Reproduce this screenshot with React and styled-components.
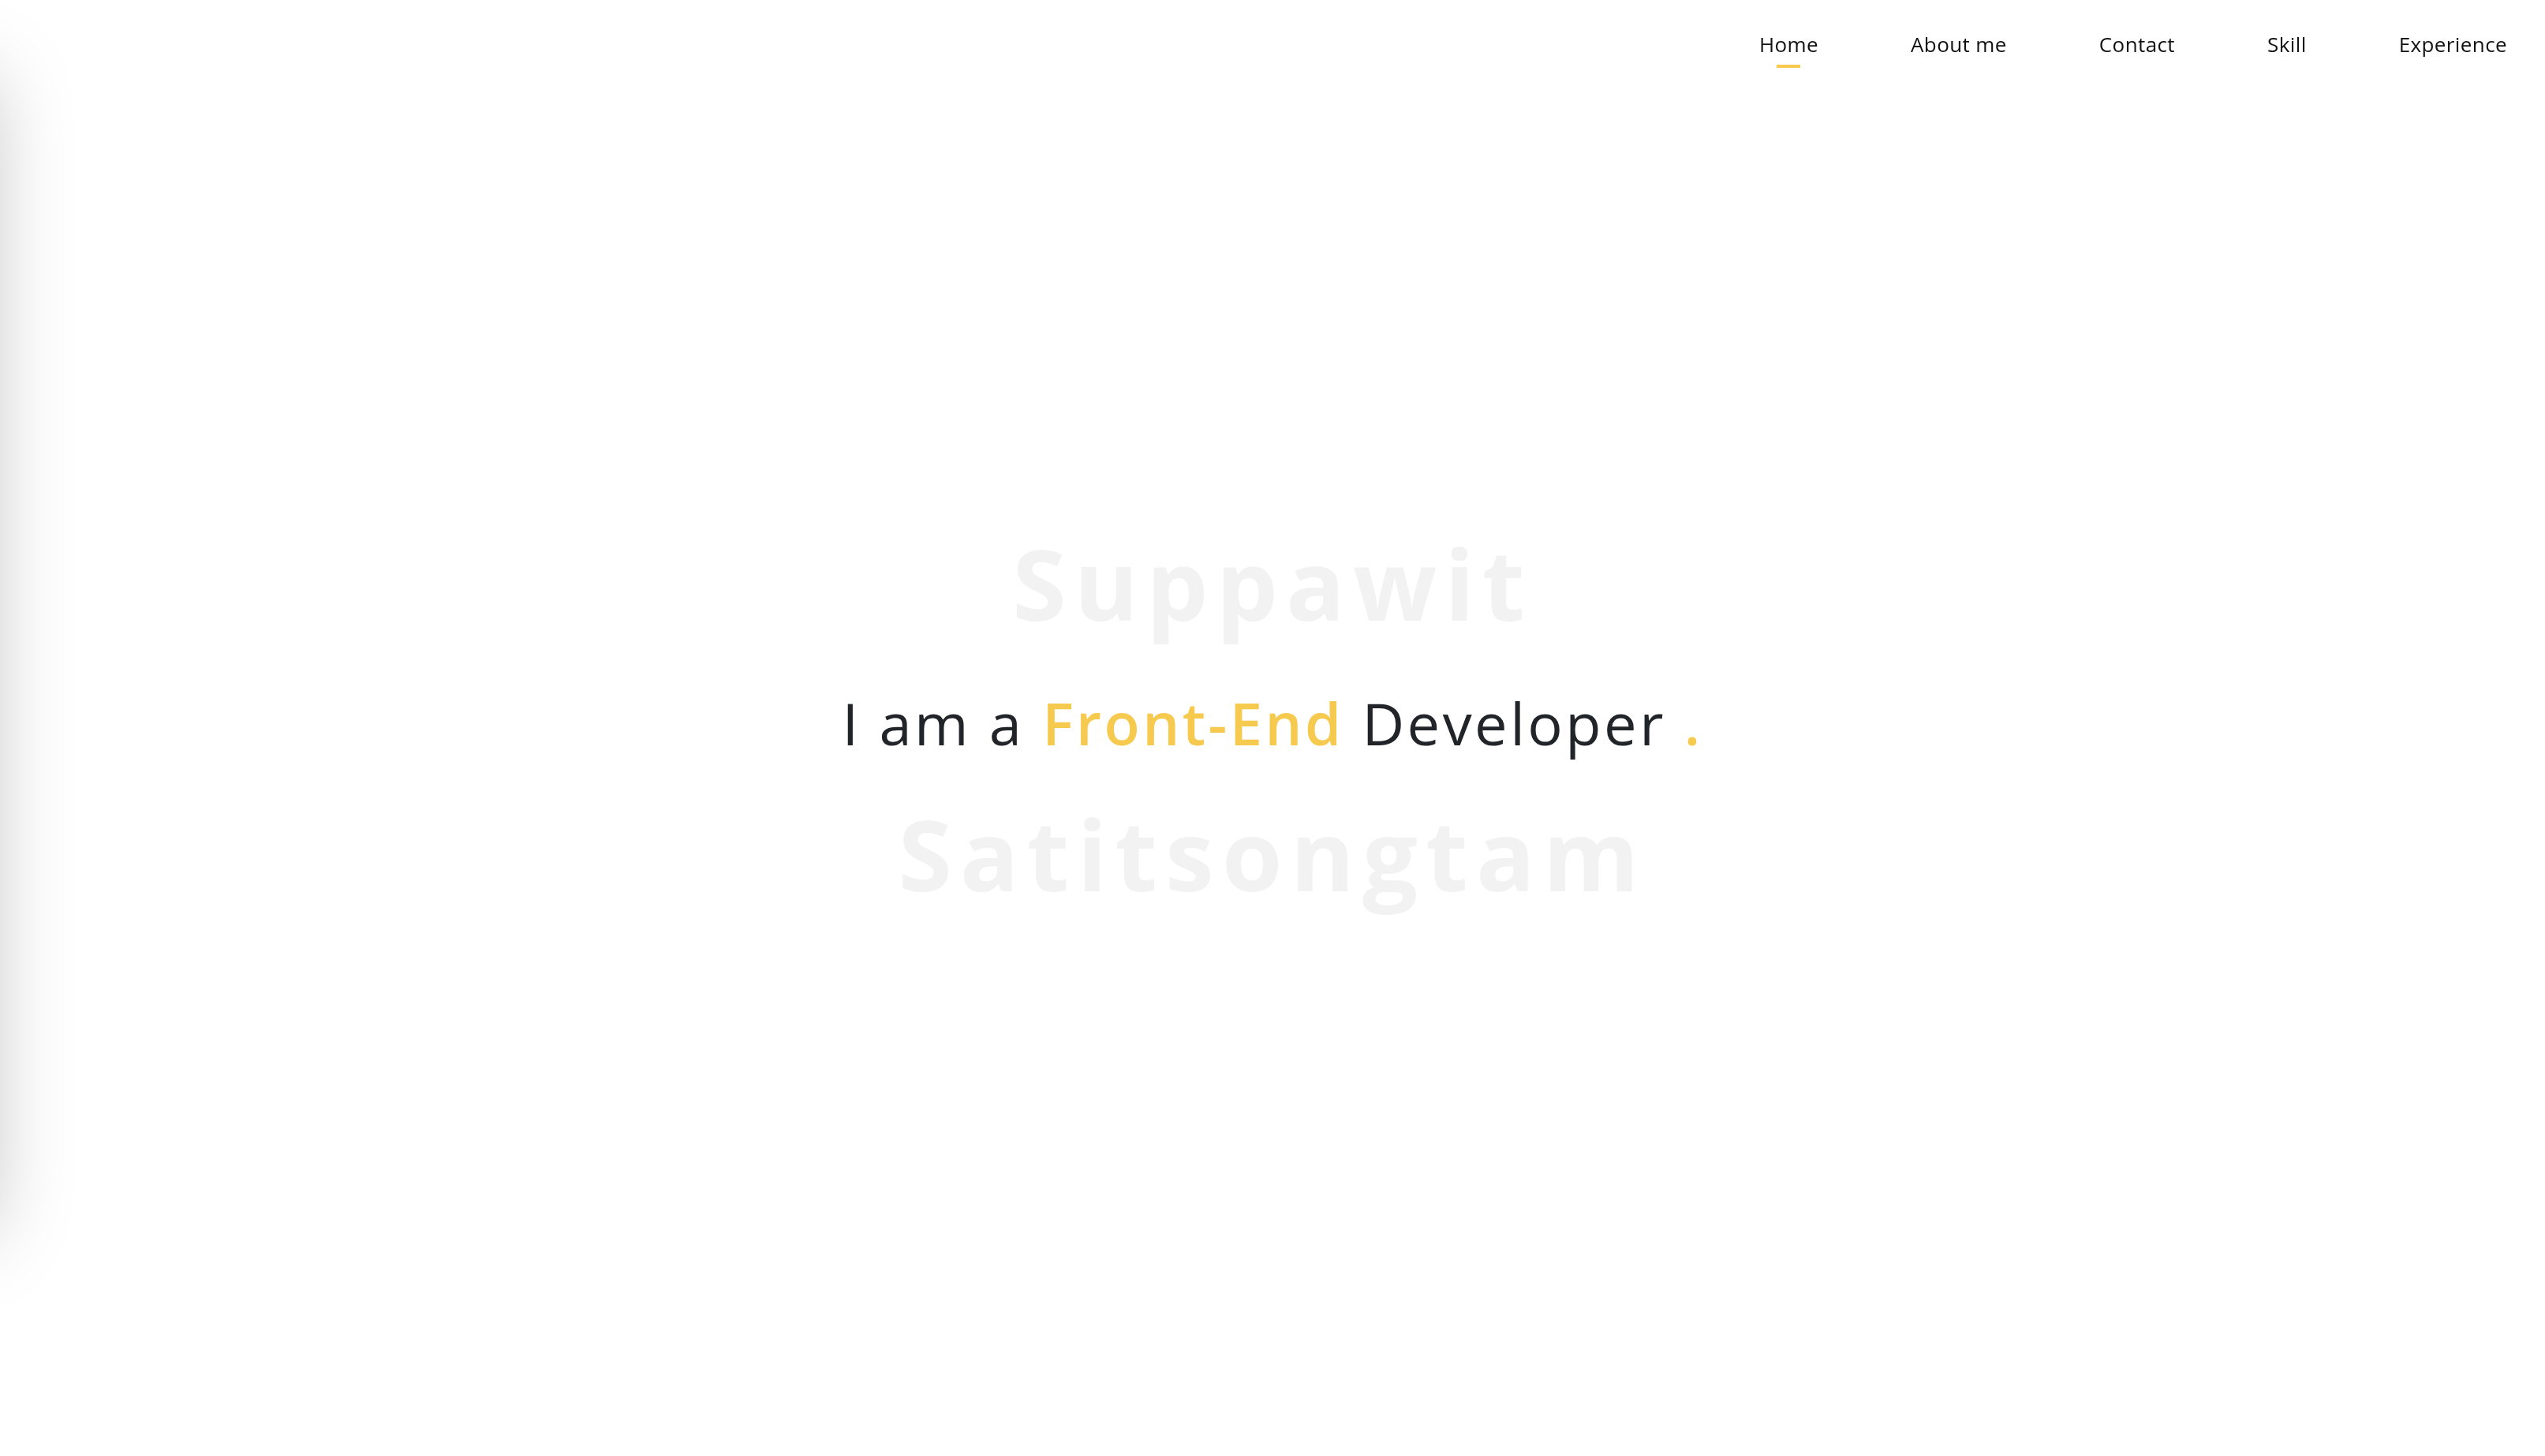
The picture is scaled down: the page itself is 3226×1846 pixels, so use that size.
import React from 'react';
import styled, { createGlobalStyle } from 'styled-components';

const GlobalStyle = createGlobalStyle`
  * {
    box-sizing: border-box;
  }
  html, body {
    margin: 0;
    padding: 0;
    background: #ffffff;
    font-family: 'Open Sans', 'Noto Sans', sans-serif;
  }
`;

const StyledPage = styled.div`
  position: relative;
  min-height: 100vh;
  width: 100%;
  overflow: hidden;
`;

// off-canvas drawer, only its shadow shows on the left edge
const StyledDrawer = styled.aside`
  position: fixed;
  top: 100px;
  left: -326px;
  width: 310px;
  height: 1460px;
  background: #ffffff;
  box-shadow: 0 0 100px rgba(0, 0, 0, 0.26);
  z-index: 2;
`;

const StyledHeader = styled.header`
  position: fixed;
  top: 0;
  right: 0;
  left: 0;
  display: flex;
  justify-content: flex-end;
  padding: 38px 48px 0 0;
  z-index: 3;
`;

const StyledNav = styled.nav`
  display: flex;
  gap: 117px;
`;

const StyledNavItem = styled.a`
  position: relative;
  font-size: 26px;
  line-height: 36px;
  color: #111111;
  text-decoration: none;
  letter-spacing: 0.4px;

  &::after {
    content: '';
    position: absolute;
    left: 50%;
    bottom: -12px;
    width: 30px;
    height: 4px;
    margin-left: -15px;
    background: #f6ca4f;
    opacity: ${(props) => (props.active ? 1 : 0)};
  }
`;

const StyledHero = styled.main`
  display: flex;
  flex-direction: column;
  align-items: center;
  justify-content: center;
  min-height: 100vh;
  padding-bottom: 25px;
  text-align: center;
`;

const StyledGhost = styled.div`
  font-size: 124px;
  font-weight: 700;
  line-height: 1;
  color: #f2f2f2;
  letter-spacing: 10px;
  margin: ${(props) => props.margin};
`;

const StyledTagline = styled.h1`
  margin: 0;
  font-size: 74px;
  font-weight: 400;
  line-height: 1;
  letter-spacing: 3.5px;
  color: #212428;
`;

const StyledHighlight = styled.span`
  color: #f6ca4f;
  font-weight: 600;
`;

const navItems = ['Home', 'About me', 'Contact', 'Skill', 'Experience'];

const App = () => (
  <StyledPage>
    <GlobalStyle />
    <StyledDrawer />
    <StyledHeader>
      <StyledNav>
        {navItems.map((item, index) => (
          <StyledNavItem key={item} href="#" active={index === 0 ? 1 : 0}>
            {item}
          </StyledNavItem>
        ))}
      </StyledNav>
    </StyledHeader>
    <StyledHero>
      <StyledGhost margin="0 0 79px">Suppawit</StyledGhost>
      <StyledTagline>
        I am a <StyledHighlight>Front-End</StyledHighlight> Developer{' '}
        <StyledHighlight>.</StyledHighlight>
      </StyledTagline>
      <StyledGhost margin="66px 0 0">Satitsongtam</StyledGhost>
    </StyledHero>
  </StyledPage>
);

export default App;
